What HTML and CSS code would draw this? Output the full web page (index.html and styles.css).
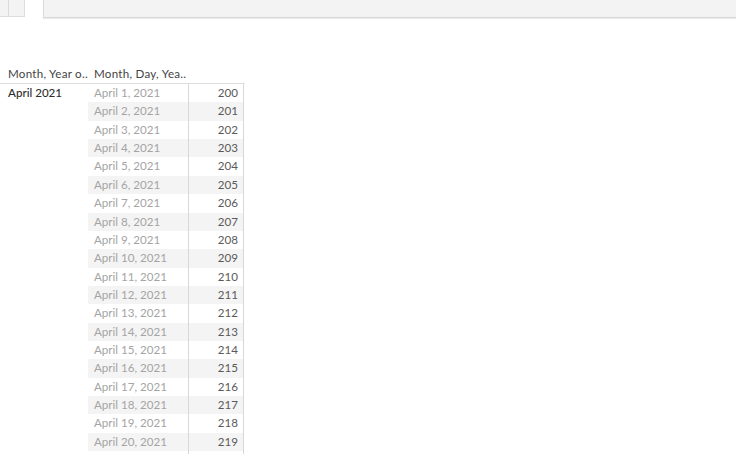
FILE: index.html
```html
<!DOCTYPE html>
<html>
<head>
<meta charset="utf-8">
<link rel="stylesheet" href="styles.css">
</head>
<body>
<div class="topbar">
  <div class="tabs"><div class="tab-a"></div><div class="tab-b"></div></div>
  <div class="search"></div>
</div>
<div class="sheet">
  <div class="header">
    <div class="h1">Month, Year o..</div>
    <div class="h2">Month, Day, Yea..</div>
  </div>
  <div class="body">
    <div class="rowhead">April 2021</div>
    <div class="rows">
      <div class="row"><div class="date">April 1, 2021</div><div class="num">200</div></div>
      <div class="row alt"><div class="date">April 2, 2021</div><div class="num">201</div></div>
      <div class="row"><div class="date">April 3, 2021</div><div class="num">202</div></div>
      <div class="row alt"><div class="date">April 4, 2021</div><div class="num">203</div></div>
      <div class="row"><div class="date">April 5, 2021</div><div class="num">204</div></div>
      <div class="row alt"><div class="date">April 6, 2021</div><div class="num">205</div></div>
      <div class="row"><div class="date">April 7, 2021</div><div class="num">206</div></div>
      <div class="row alt"><div class="date">April 8, 2021</div><div class="num">207</div></div>
      <div class="row"><div class="date">April 9, 2021</div><div class="num">208</div></div>
      <div class="row alt"><div class="date">April 10, 2021</div><div class="num">209</div></div>
      <div class="row"><div class="date">April 11, 2021</div><div class="num">210</div></div>
      <div class="row alt"><div class="date">April 12, 2021</div><div class="num">211</div></div>
      <div class="row"><div class="date">April 13, 2021</div><div class="num">212</div></div>
      <div class="row alt"><div class="date">April 14, 2021</div><div class="num">213</div></div>
      <div class="row"><div class="date">April 15, 2021</div><div class="num">214</div></div>
      <div class="row alt"><div class="date">April 16, 2021</div><div class="num">215</div></div>
      <div class="row"><div class="date">April 17, 2021</div><div class="num">216</div></div>
      <div class="row alt"><div class="date">April 18, 2021</div><div class="num">217</div></div>
      <div class="row"><div class="date">April 19, 2021</div><div class="num">218</div></div>
      <div class="row alt"><div class="date">April 20, 2021</div><div class="num">219</div></div>
      <div class="row"><div class="date"></div><div class="num"></div></div>
    </div>
  </div>
</div>
</body>
</html>
```
FILE: styles.css
```css
html, body {
  margin: 0;
  padding: 0;
  background: #fff;
  overflow: hidden;
}
body {
  font-family: Lato, "Open Sans", sans-serif;
  font-size: 11.6px;
  color: #333;
}
.topbar {
  display: flex;
  align-items: flex-start;
  gap: 18px;
  height: 18px;
}
.tabs {
  display: flex;
  width: 25px;
  height: 17px;
  background: #f3f3f3;
  border-right: 1px solid #dcdcdc;
  border-bottom: 1px solid #dcdcdc;
  box-sizing: border-box;
}
.tab-a {
  width: 8px;
  border-right: 1px solid #dcdcdc;
}
.search {
  flex: 1;
  height: 17px;
  background: #f3f3f3;
  border-left: 1px solid #dcdcdc;
  border-bottom: 1px solid #d8d8d8;
  box-shadow: 0 1px 1px #ececec;
}
.sheet {
  margin-top: 46px;
  width: 245px;
}
.header {
  display: flex;
  height: 19px;
  align-items: center;
  border-bottom: 1px solid #dedede;
  color: #444;
  letter-spacing: 0.25px;
}
.h1 {
  width: 86px;
  padding-left: 8px;
  box-sizing: border-box;
  white-space: nowrap;
}
.h2 {
  padding-left: 8px;
  white-space: nowrap;
}
.body {
  display: flex;
}
.rowhead {
  width: 88px;
  padding-left: 8px;
  box-sizing: border-box;
  height: 18.37px;
  line-height: 18.37px;
  color: #2e2e2e;
  font-weight: 500;
}
.rows {
  display: flex;
  flex-direction: column;
}
.row {
  display: flex;
  height: 18.37px;
  line-height: 18.37px;
}
.row.alt {
  background: #f4f4f4;
}
.date {
  width: 100px;
  padding-left: 6px;
  box-sizing: border-box;
  color: #a4a4a4;
  white-space: nowrap;
}
.num {
  width: 56px;
  padding-right: 5px;
  box-sizing: border-box;
  text-align: right;
  color: #5a5a5a;
  border-left: 1px solid #d8d8d8;
  border-right: 1px solid #d8d8d8;
}
```
